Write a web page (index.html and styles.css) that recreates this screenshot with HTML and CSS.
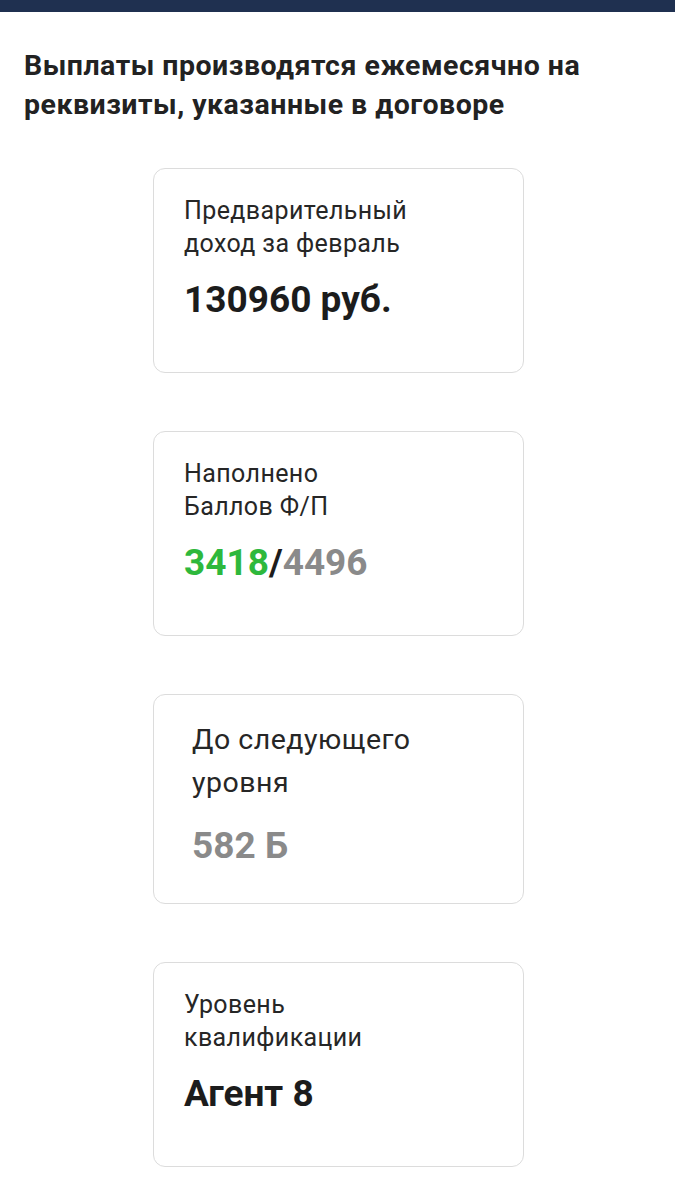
FILE: index.html
```html
<!DOCTYPE html>
<html lang="ru">
<head>
<meta charset="utf-8">
<link rel="stylesheet" href="styles.css">
</head>
<body>
<div class="topbar"></div>
<main class="content">
  <h1 class="title">Выплаты производятся ежемесячно на реквизиты, указанные в договоре</h1>
  <div class="cards">
    <section class="card">
      <div class="label">Предварительный<br>доход за февраль</div>
      <div class="value">130960 руб.</div>
    </section>
    <section class="card">
      <div class="label">Наполнено<br>Баллов Ф/П</div>
      <div class="value"><span class="green">3418</span>/<span class="gray">4496</span></div>
    </section>
    <section class="card card-big">
      <div class="label">До следующего<br>уровня</div>
      <div class="value gray">582 Б</div>
    </section>
    <section class="card">
      <div class="label">Уровень<br>квалификации</div>
      <div class="value">Агент 8</div>
    </section>
  </div>
</main>
</body>
</html>
```
FILE: styles.css
```css
html, body {
  margin: 0;
  padding: 0;
  background: #ffffff;
}
body {
  font-family: Roboto, "Noto Sans", sans-serif;
  color: #1f1f1f;
  width: 675px;
}
.topbar {
  height: 12px;
  background: #1f3050;
}
.content {
  padding: 34px 24px 0 24px;
}
.title {
  margin: 0;
  max-width: 600px;
  font-size: 28.5px;
  font-weight: 700;
  line-height: 39px;
  letter-spacing: 0.5px;
  color: #222;
}
.cards {
  display: flex;
  flex-direction: column;
  align-items: flex-start;
  gap: 58px;
  margin-top: 44px;
  padding-left: 129px;
}
.card {
  box-sizing: border-box;
  width: 371px;
  height: 205px;
  border: 1px solid #dcdcdc;
  border-radius: 12px;
  padding: 25px 30px 0 30px;
}
.card-big {
  height: 210px;
  padding-left: 38px;
  padding-top: 23px;
}
.label {
  font-size: 25px;
  line-height: 33px;
  letter-spacing: 0.4px;
  color: #262626;
}
.card-big .label {
  font-size: 28.5px;
  line-height: 43px;
  letter-spacing: 0.5px;
}
.value {
  margin-top: 18px;
  font-size: 37px;
  font-weight: 700;
  line-height: 44px;
  color: #1c1c1c;
}
.card-big .value {
  margin-top: 20px;
}
.green { color: #2eb83c; }
.gray { color: #8a8a8a; }
```
